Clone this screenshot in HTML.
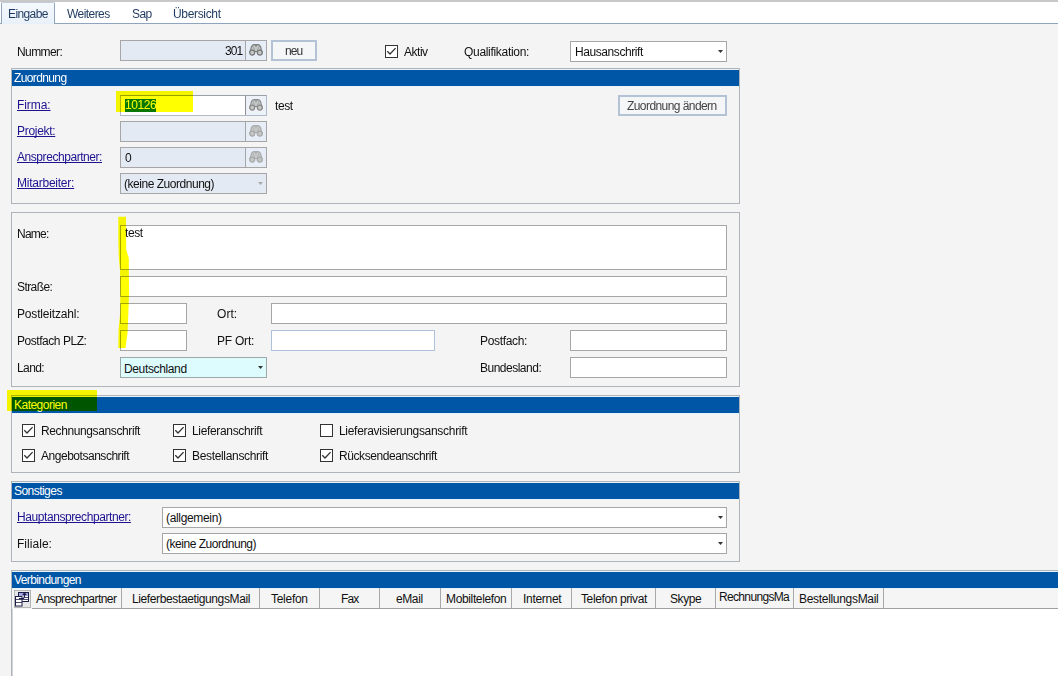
<!DOCTYPE html>
<html><head><meta charset="utf-8"><style>
html,body{margin:0;padding:0;}
body{width:1058px;height:676px;overflow:hidden;position:relative;background:#f4f4f4;font-family:"Liberation Sans",sans-serif;font-size:11px;}
.r{position:absolute;box-sizing:border-box;}
.t{position:absolute;line-height:13px;white-space:nowrap;font-size:12px;}
</style></head><body>
<div class="r" style="left:0px;top:0px;width:1058px;height:2px;background:#c8c8c8;"></div>
<div class="r" style="left:0px;top:2px;width:1058px;height:21px;background:#fff;"></div>
<div class="r" style="left:0px;top:23px;width:1058px;height:1px;background:#8fa4bd;"></div>
<div class="r" style="left:1px;top:2px;width:54px;height:22px;border:1px solid #8fa4bd;border-top-color:#c0ccd8;border-bottom:none;border-radius:2px 2px 0 0;background:linear-gradient(#f5f9fd,#e8f0f9)"></div>
<div class="t" style="left:8px;top:8px;color:#1e3a5f;letter-spacing:-0.60px;">Eingabe</div>
<div class="t" style="left:67px;top:8px;color:#1e3a5f;letter-spacing:-0.56px;">Weiteres</div>
<div class="t" style="left:132px;top:8px;color:#1e3a5f;letter-spacing:-0.55px;">Sap</div>
<div class="t" style="left:173px;top:8px;color:#1e3a5f;letter-spacing:-0.34px;">Übersicht</div>
<div class="t" style="left:17px;top:46px;color:#111111;letter-spacing:-0.60px;">Nummer:</div>
<div class="r" style="left:120px;top:40px;width:147px;height:21px;background:#e4eaf4;border:1px solid #a6a6a6;"></div>
<div class="r" style="left:245px;top:41px;width:1px;height:19px;background:#a6a6a6;"></div>
<div class="t" style="left:225px;top:45px;color:#111111;letter-spacing:-0.90px;">301</div>
<div class="r" style="left:246px;top:41px;width:20px;height:19px;background:#e8eef7;"></div>
<svg class="r" style="left:249px;top:44px" width="14" height="12" viewBox="0 0 14 12">
<path d="M1.3 7.5 L2.3 3 Q3 0.7 5.2 0.6 L6.3 0.6 L7 2.2 L7.7 0.6 L8.8 0.6 Q11 0.7 11.7 3 L12.7 7.5 Z" fill="#c4c8c8" stroke="#787878" stroke-width="1.1"/>
<path d="M4 2.5 L5.5 6 M10 2.5 L8.5 6" stroke="#787878" stroke-width=".8" opacity=".7"/>
<circle cx="3.2" cy="8.6" r="2.5" fill="#c4c8c8" stroke="#787878" stroke-width="1.3"/>
<circle cx="10.8" cy="8.6" r="2.5" fill="#c4c8c8" stroke="#787878" stroke-width="1.3"/></svg>
<div class="r" style="left:271px;top:40px;width:46px;height:21px;background:#f5f6f8;border:1px solid #b4c2d5;border-width:2px;"></div>
<div class="t" style="left:285px;top:45px;color:#333;letter-spacing:-0.90px;">neu</div>
<div class="r" style="left:385px;top:45px;width:13px;height:13px;background:#fff;border:1px solid #333;"></div>
<svg class="r" style="left:385px;top:45px" width="13" height="13" viewBox="0 0 13 13"><path d="M2.3 6.2 L5 9 L10.6 3.1" fill="none" stroke="#333" stroke-width="1.3"/></svg>
<div class="t" style="left:404px;top:46px;color:#111111;letter-spacing:-0.47px;">Aktiv</div>
<div class="t" style="left:464px;top:46px;color:#111111;letter-spacing:-0.31px;">Qualifikation:</div>
<div class="r" style="left:570px;top:41px;width:157px;height:21px;background:#fff;border:1px solid #a6a6a6;"></div>
<div class="t" style="left:575px;top:46px;color:#111111;letter-spacing:-0.42px;">Hausanschrift</div>
<svg class="r" style="left:718px;top:50px" width="5" height="3" viewBox="0 0 5 3"><path d="M0 0H5L2.5 3Z" fill="#333"/></svg>
<div class="r" style="left:11px;top:68px;width:729px;height:136px;border:1px solid #aeb4ba;"></div>
<div class="r" style="left:12px;top:69px;width:727px;height:1px;background:#e6f4fa;"></div>
<div class="r" style="left:12px;top:70px;width:727px;height:16px;background:#0056a6;"></div>
<div class="r" style="left:12px;top:86px;width:727px;height:1px;background:#e6f4fa;"></div>
<div class="t" style="left:14px;top:72px;color:#fff;letter-spacing:-0.62px;">Zuordnung</div>
<div class="t" style="left:17px;top:99px;color:#1c1290;letter-spacing:-0.08px;text-decoration:underline;text-underline-offset:0.5px;text-decoration-skip-ink:none;">Firma:</div>
<div class="t" style="left:17px;top:125px;color:#1c1290;letter-spacing:-0.30px;text-decoration:underline;text-underline-offset:0.5px;text-decoration-skip-ink:none;">Projekt:</div>
<div class="t" style="left:17px;top:151px;color:#1c1290;letter-spacing:-0.44px;text-decoration:underline;text-underline-offset:0.5px;text-decoration-skip-ink:none;">Ansprechpartner:</div>
<div class="t" style="left:17px;top:177px;color:#1c1290;letter-spacing:-0.24px;text-decoration:underline;text-underline-offset:0.5px;text-decoration-skip-ink:none;">Mitarbeiter:</div>
<div class="r" style="left:120px;top:95px;width:147px;height:21px;background:#fff;border:1px solid #b0bacb;border-top-color:#98a0ac;"></div>
<div class="r" style="left:245px;top:96px;width:21px;height:19px;background:#edf2f9;"></div>
<div class="r" style="left:245px;top:96px;width:1px;height:19px;background:#8e9096;"></div>
<svg class="r" style="left:249px;top:99px" width="14" height="12" viewBox="0 0 14 12">
<path d="M1.3 7.5 L2.3 3 Q3 0.7 5.2 0.6 L6.3 0.6 L7 2.2 L7.7 0.6 L8.8 0.6 Q11 0.7 11.7 3 L12.7 7.5 Z" fill="#c4c8c8" stroke="#888888" stroke-width="1.1"/>
<path d="M4 2.5 L5.5 6 M10 2.5 L8.5 6" stroke="#888888" stroke-width=".8" opacity=".7"/>
<circle cx="3.2" cy="8.6" r="2.5" fill="#c4c8c8" stroke="#888888" stroke-width="1.3"/>
<circle cx="10.8" cy="8.6" r="2.5" fill="#c4c8c8" stroke="#888888" stroke-width="1.3"/></svg>
<div class="t" style="left:275px;top:100px;color:#111111;letter-spacing:-0.40px;">test</div>
<div class="r" style="left:120px;top:121px;width:147px;height:21px;background:#e4eaf4;border:1px solid #a6a6a6;"></div>
<div class="r" style="left:245px;top:122px;width:1px;height:19px;background:#a6a6a6;"></div>
<div class="r" style="left:246px;top:122px;width:20px;height:19px;background:#e8eef7;"></div>
<svg class="r" style="left:249px;top:125px" width="14" height="12" viewBox="0 0 14 12">
<path d="M1.3 7.5 L2.3 3 Q3 0.7 5.2 0.6 L6.3 0.6 L7 2.2 L7.7 0.6 L8.8 0.6 Q11 0.7 11.7 3 L12.7 7.5 Z" fill="#c4c8c8" stroke="#a8a8a8" stroke-width="1.1"/>
<path d="M4 2.5 L5.5 6 M10 2.5 L8.5 6" stroke="#a8a8a8" stroke-width=".8" opacity=".7"/>
<circle cx="3.2" cy="8.6" r="2.5" fill="#c4c8c8" stroke="#a8a8a8" stroke-width="1.3"/>
<circle cx="10.8" cy="8.6" r="2.5" fill="#c4c8c8" stroke="#a8a8a8" stroke-width="1.3"/></svg>
<div class="r" style="left:120px;top:147px;width:147px;height:21px;background:#e4eaf4;border:1px solid #a6a6a6;"></div>
<div class="r" style="left:245px;top:148px;width:1px;height:19px;background:#a6a6a6;"></div>
<div class="r" style="left:246px;top:148px;width:20px;height:19px;background:#e8eef7;"></div>
<svg class="r" style="left:249px;top:151px" width="14" height="12" viewBox="0 0 14 12">
<path d="M1.3 7.5 L2.3 3 Q3 0.7 5.2 0.6 L6.3 0.6 L7 2.2 L7.7 0.6 L8.8 0.6 Q11 0.7 11.7 3 L12.7 7.5 Z" fill="#c4c8c8" stroke="#a8a8a8" stroke-width="1.1"/>
<path d="M4 2.5 L5.5 6 M10 2.5 L8.5 6" stroke="#a8a8a8" stroke-width=".8" opacity=".7"/>
<circle cx="3.2" cy="8.6" r="2.5" fill="#c4c8c8" stroke="#a8a8a8" stroke-width="1.3"/>
<circle cx="10.8" cy="8.6" r="2.5" fill="#c4c8c8" stroke="#a8a8a8" stroke-width="1.3"/></svg>
<div class="t" style="left:125px;top:152px;color:#111111;letter-spacing:-0.45px;">0</div>
<div class="r" style="left:120px;top:173px;width:147px;height:21px;background:#e4eaf4;border:1px solid #a6a6a6;"></div>
<div class="t" style="left:124px;top:178px;color:#111111;letter-spacing:-0.47px;">(keine Zuordnung)</div>
<svg class="r" style="left:258px;top:182px" width="5" height="3" viewBox="0 0 5 3"><path d="M0 0H5L2.5 3Z" fill="#aaa"/></svg>
<div class="r" style="left:618px;top:95px;width:109px;height:21px;background:#f5f6f8;border:1px solid #b4c2d5;border-width:2px;"></div>
<div class="t" style="left:627px;top:100px;color:#444;letter-spacing:-0.57px;">Zuordnung ändern</div>
<div class="r" style="left:125px;top:99px;width:31px;height:13px;background:#0a78d0;"></div>
<div class="t" style="left:125px;top:99px;color:#fff;letter-spacing:-0.45px;">10126</div>
<div class="r" style="left:116px;top:91px;width:77px;height:21px;background:#ffff00;mix-blend-mode:multiply;"></div>
<div class="r" style="left:11px;top:212px;width:729px;height:175px;border:1px solid #aeb4ba;"></div>
<div class="t" style="left:17px;top:228px;color:#111111;letter-spacing:-0.78px;">Name:</div>
<div class="r" style="left:120px;top:225px;width:607px;height:45px;background:#fff;border:1px solid #a6a6a6;"></div>
<div class="t" style="left:125px;top:227px;color:#111111;letter-spacing:-0.40px;">test</div>
<div class="t" style="left:17px;top:281px;color:#111111;letter-spacing:-0.57px;">Straße:</div>
<div class="r" style="left:120px;top:276px;width:607px;height:21px;background:#fff;border:1px solid #a6a6a6;"></div>
<div class="t" style="left:17px;top:308px;color:#111111;letter-spacing:-0.18px;">Postleitzahl:</div>
<div class="r" style="left:120px;top:303px;width:67px;height:21px;background:#fff;border:1px solid #a6a6a6;"></div>
<div class="t" style="left:217px;top:308px;color:#111111;letter-spacing:0.05px;">Ort:</div>
<div class="r" style="left:271px;top:303px;width:456px;height:21px;background:#fff;border:1px solid #a6a6a6;"></div>
<div class="t" style="left:17px;top:335px;color:#111111;letter-spacing:-0.46px;">Postfach PLZ:</div>
<div class="r" style="left:120px;top:330px;width:67px;height:21px;background:#fff;border:1px solid #a6a6a6;"></div>
<div class="t" style="left:217px;top:335px;color:#111111;letter-spacing:-0.22px;">PF Ort:</div>
<div class="r" style="left:271px;top:330px;width:164px;height:21px;background:#fff;border:1px solid #aec0da;"></div>
<div class="t" style="left:480px;top:335px;color:#111111;letter-spacing:-0.33px;">Postfach:</div>
<div class="r" style="left:570px;top:330px;width:157px;height:21px;background:#fff;border:1px solid #a6a6a6;"></div>
<div class="t" style="left:17px;top:362px;color:#111111;letter-spacing:-0.60px;">Land:</div>
<div class="r" style="left:120px;top:357px;width:147px;height:21px;background:#dcfcfd;border:1px solid #9ea8a8;"></div>
<div class="t" style="left:124px;top:363px;color:#111111;letter-spacing:-0.36px;">Deutschland</div>
<svg class="r" style="left:258px;top:366px" width="5" height="3" viewBox="0 0 5 3"><path d="M0 0H5L2.5 3Z" fill="#333"/></svg>
<div class="t" style="left:480px;top:362px;color:#111111;letter-spacing:-0.50px;">Bundesland:</div>
<div class="r" style="left:570px;top:357px;width:157px;height:21px;background:#fff;border:1px solid #a6a6a6;"></div>
<svg class="r" style="left:0;top:0;mix-blend-mode:multiply" width="1058" height="676"><path d="M118.3 216.7 L126 216.7 L126.2 250 L128.8 258 L129.1 293 L127.6 332 L125.5 348 L118.3 348 L118.5 330 L120.3 312 L120 270 L118.8 258 L118.3 240 Z" fill="#ffff00"/></svg>
<div class="r" style="left:11px;top:395px;width:729px;height:78px;border:1px solid #aeb4ba;"></div>
<div class="r" style="left:12px;top:396px;width:727px;height:1px;background:#e6f4fa;"></div>
<div class="r" style="left:12px;top:397px;width:727px;height:16px;background:#0056a6;"></div>
<div class="r" style="left:12px;top:413px;width:727px;height:1px;background:#e6f4fa;"></div>
<div class="t" style="left:14px;top:399px;color:#fff;letter-spacing:-0.52px;">Kategorien</div>
<div class="r" style="left:7px;top:390px;width:90px;height:21px;background:#ffff00;mix-blend-mode:multiply;"></div>
<div class="r" style="left:22px;top:424px;width:13px;height:13px;background:#fff;border:1px solid #333;"></div>
<svg class="r" style="left:22px;top:424px" width="13" height="13" viewBox="0 0 13 13"><path d="M2.3 6.2 L5 9 L10.6 3.1" fill="none" stroke="#333" stroke-width="1.3"/></svg>
<div class="t" style="left:41px;top:425px;color:#111111;letter-spacing:-0.39px;">Rechnungsanschrift</div>
<div class="r" style="left:173px;top:424px;width:13px;height:13px;background:#fff;border:1px solid #333;"></div>
<svg class="r" style="left:173px;top:424px" width="13" height="13" viewBox="0 0 13 13"><path d="M2.3 6.2 L5 9 L10.6 3.1" fill="none" stroke="#333" stroke-width="1.3"/></svg>
<div class="t" style="left:192px;top:425px;color:#111111;letter-spacing:-0.34px;">Lieferanschrift</div>
<div class="r" style="left:320px;top:424px;width:13px;height:13px;background:#fff;border:1px solid #333;"></div>
<div class="t" style="left:339px;top:425px;color:#111111;letter-spacing:-0.30px;">Lieferavisierungsanschrift</div>
<div class="r" style="left:22px;top:449px;width:13px;height:13px;background:#fff;border:1px solid #333;"></div>
<svg class="r" style="left:22px;top:449px" width="13" height="13" viewBox="0 0 13 13"><path d="M2.3 6.2 L5 9 L10.6 3.1" fill="none" stroke="#333" stroke-width="1.3"/></svg>
<div class="t" style="left:41px;top:450px;color:#111111;letter-spacing:-0.47px;">Angebotsanschrift</div>
<div class="r" style="left:173px;top:449px;width:13px;height:13px;background:#fff;border:1px solid #333;"></div>
<svg class="r" style="left:173px;top:449px" width="13" height="13" viewBox="0 0 13 13"><path d="M2.3 6.2 L5 9 L10.6 3.1" fill="none" stroke="#333" stroke-width="1.3"/></svg>
<div class="t" style="left:192px;top:450px;color:#111111;letter-spacing:-0.33px;">Bestellanschrift</div>
<div class="r" style="left:320px;top:449px;width:13px;height:13px;background:#fff;border:1px solid #333;"></div>
<svg class="r" style="left:320px;top:449px" width="13" height="13" viewBox="0 0 13 13"><path d="M2.3 6.2 L5 9 L10.6 3.1" fill="none" stroke="#333" stroke-width="1.3"/></svg>
<div class="t" style="left:339px;top:450px;color:#111111;letter-spacing:-0.42px;">Rücksendeanschrift</div>
<div class="r" style="left:11px;top:481px;width:729px;height:81px;border:1px solid #aeb4ba;"></div>
<div class="r" style="left:12px;top:482px;width:727px;height:1px;background:#e6f4fa;"></div>
<div class="r" style="left:12px;top:483px;width:727px;height:16px;background:#0056a6;"></div>
<div class="r" style="left:12px;top:499px;width:727px;height:1px;background:#e6f4fa;"></div>
<div class="t" style="left:14px;top:485px;color:#fff;letter-spacing:-0.54px;">Sonstiges</div>
<div class="t" style="left:17px;top:511px;color:#1c1290;letter-spacing:-0.42px;text-decoration:underline;text-underline-offset:0.5px;text-decoration-skip-ink:none;">Hauptansprechpartner:</div>
<div class="r" style="left:162px;top:507px;width:565px;height:21px;background:#fff;border:1px solid #a6a6a6;"></div>
<div class="t" style="left:166px;top:512px;color:#111111;letter-spacing:-0.34px;">(allgemein)</div>
<svg class="r" style="left:718px;top:516px" width="5" height="3" viewBox="0 0 5 3"><path d="M0 0H5L2.5 3Z" fill="#333"/></svg>
<div class="t" style="left:17px;top:538px;color:#111111;letter-spacing:0.04px;">Filiale:</div>
<div class="r" style="left:162px;top:533px;width:565px;height:21px;background:#fff;border:1px solid #a6a6a6;"></div>
<div class="t" style="left:166px;top:538px;color:#111111;letter-spacing:-0.47px;">(keine Zuordnung)</div>
<svg class="r" style="left:718px;top:542px" width="5" height="3" viewBox="0 0 5 3"><path d="M0 0H5L2.5 3Z" fill="#333"/></svg>
<div class="r" style="left:11px;top:570px;width:1047px;height:106px;background:#fff;border:1px solid #aeb4ba;border-right:none;border-bottom:none;"></div>
<div class="r" style="left:12px;top:571px;width:1046px;height:1px;background:#e6f4fa;"></div>
<div class="r" style="left:12px;top:572px;width:1046px;height:16px;background:#0056a6;"></div>
<div class="r" style="left:12px;top:588px;width:1046px;height:1px;background:#e6f4fa;"></div>
<div class="t" style="left:14px;top:574px;color:#fff;letter-spacing:-0.60px;">Verbindungen</div>
<div class="r" style="left:12px;top:589px;width:1046px;height:20px;background:#f5f5f5;"></div>
<div class="r" style="left:32px;top:608px;width:1026px;height:1px;background:#a0a0a0;"></div>
<div class="r" style="left:12px;top:609px;width:1px;height:67px;background:#d0d4d8;"></div>
<svg class="r" style="left:14px;top:590px" width="17" height="18" viewBox="0 0 17 18">
<rect x="0.5" y="0.5" width="16" height="17" fill="#e6e6e6" stroke="#b4b4b4"/>
<rect x="4.5" y="2.5" width="10" height="9" fill="#fff" stroke="#1c1c48"/>
<rect x="5" y="3" width="9" height="3" fill="#a9a9e2"/>
<rect x="1.5" y="6.5" width="6.5" height="9.5" fill="#fff" stroke="#1c1c48"/>
<path d="M2 9.5H8M2 12.5H8M10.5 7.5H14M8 9.5H14" stroke="#1c1c48" stroke-width=".8"/>
<path d="M5 8.5H8.5Q10.5 8.5 10.5 6V4.5" fill="none" stroke="#1c1c48" stroke-width="1.2"/>
<path d="M8.2 5L10.5 2.2L12.8 5Z" fill="#1c1c48"/></svg>
<div class="r" style="left:121px;top:588px;width:1px;height:20px;background:#a8a8a8;"></div>
<div class="t" style="left:36px;top:593px;color:#111111;letter-spacing:-0.56px;">Ansprechpartner</div>
<div class="r" style="left:259px;top:588px;width:1px;height:20px;background:#a8a8a8;"></div>
<div class="t" style="left:132px;top:593px;color:#111111;letter-spacing:-0.38px;">LieferbestaetigungsMail</div>
<div class="r" style="left:319px;top:588px;width:1px;height:20px;background:#a8a8a8;"></div>
<div class="t" style="left:271px;top:593px;color:#111111;letter-spacing:-0.28px;">Telefon</div>
<div class="r" style="left:379px;top:588px;width:1px;height:20px;background:#a8a8a8;"></div>
<div class="t" style="left:341px;top:593px;color:#111111;letter-spacing:-0.85px;">Fax</div>
<div class="r" style="left:440px;top:588px;width:1px;height:20px;background:#a8a8a8;"></div>
<div class="t" style="left:396px;top:593px;color:#111111;letter-spacing:-0.40px;">eMail</div>
<div class="r" style="left:511px;top:588px;width:1px;height:20px;background:#a8a8a8;"></div>
<div class="t" style="left:446px;top:593px;color:#111111;letter-spacing:-0.36px;">Mobiltelefon</div>
<div class="r" style="left:571px;top:588px;width:1px;height:20px;background:#a8a8a8;"></div>
<div class="t" style="left:523px;top:593px;color:#111111;letter-spacing:-0.30px;">Internet</div>
<div class="r" style="left:655px;top:588px;width:1px;height:20px;background:#a8a8a8;"></div>
<div class="t" style="left:581px;top:593px;color:#111111;letter-spacing:-0.39px;">Telefon privat</div>
<div class="r" style="left:715px;top:588px;width:1px;height:20px;background:#a8a8a8;"></div>
<div class="t" style="left:670px;top:593px;color:#111111;letter-spacing:-0.42px;">Skype</div>
<div class="r" style="left:793px;top:588px;width:1px;height:20px;background:#a8a8a8;"></div>
<div class="t" style="left:719px;top:591px;color:#111111;letter-spacing:-0.66px;">RechnungsMa</div>
<div class="r" style="left:883px;top:588px;width:1px;height:20px;background:#a8a8a8;"></div>
<div class="t" style="left:799px;top:593px;color:#111111;letter-spacing:-0.31px;">BestellungsMail</div>
</body></html>
